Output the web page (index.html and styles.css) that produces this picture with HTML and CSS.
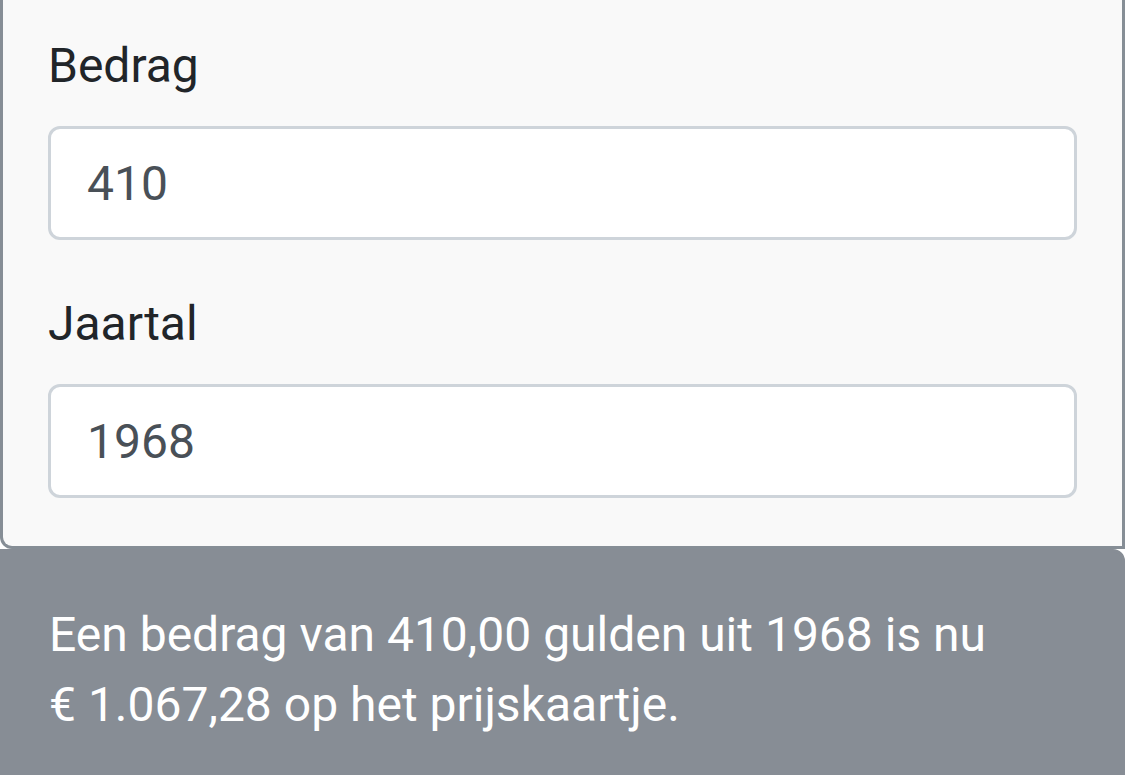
FILE: index.html
```html
<!DOCTYPE html>
<html lang="nl">
<head>
    <meta charset="UTF-8">
    <meta name="viewport" content="width=device-width, initial-scale=1.0">
    <title>Gulden rekenen</title>
    <link rel="stylesheet" href="styles.css">
</head>
<body>

    <div class="card">
        <div class="form-group">
            <label for="bedrag">Bedrag</label>
            <input type="text" id="bedrag" class="form-control" value="410">
        </div>
        <div class="form-group">
            <label for="jaartal">Jaartal</label>
            <input type="text" id="jaartal" class="form-control" value="1968">
        </div>
    </div>

    <div class="result">
        Een bedrag van 410,00 gulden uit 1968 is nu €&nbsp;1.067,28 op het prijskaartje.
    </div>

</body>
</html>
```

FILE: styles.css
```css
* {
    margin: 0;
    padding: 0;
    box-sizing: border-box;
    font-family: Roboto, "Liberation Sans", Arial, sans-serif;
}
body {
    background-color: #fff;
    width: 1125px;
    overflow: hidden;
}
.card {
    background: #f9f9f9;
    border: 3px solid #868e96;
    border-top: none;
    border-radius: 0 0 0 12px;
    padding: 30px 45px 0 45px;
}
.form-group {
    margin-bottom: 48px;
}
label {
    display: block;
    font-size: 48px;
    line-height: 72px;
    color: #212529;
    margin-bottom: 24px;
}
.form-control {
    display: block;
    width: 100%;
    height: 114px;
    padding: 18px 36px;
    font-size: 48px;
    line-height: 72px;
    color: #495057;
    background: #fff;
    border: 3px solid #ced4da;
    border-radius: 12px;
    outline: none;
}
.result {
    margin-left: -11px;
    width: 1136px;
    min-height: 260px;
    background: #878d95;
    border: 3px solid #878d95;
    border-radius: 0 12px 0 0;
    padding: 48px 57px;
    color: #fff;
    font-size: 48px;
    line-height: 70px;
}
```
